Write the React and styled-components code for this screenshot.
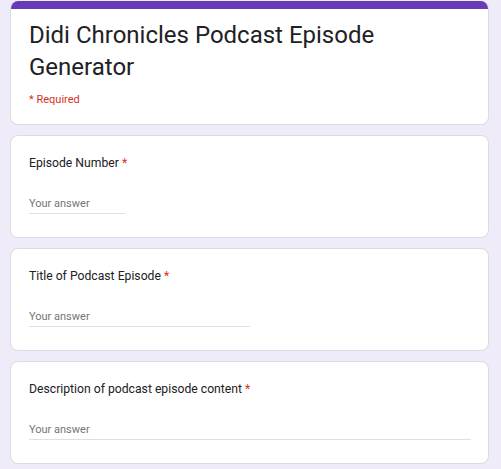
import React from 'react'
import styled, { createGlobalStyle } from 'styled-components';

const GlobalStyle = createGlobalStyle`
  body {
    margin: 0;
    background: #f0ebf8;
    font-family: Roboto, "Liberation Sans", sans-serif;
  }
`;

const questions = [
  { label: 'Episode Number', width: 96 },
  { label: 'Title of Podcast Episode', width: 221 },
  { label: 'Description of podcast episode content', width: 442 },
];

function App() {
  return (
    <>
      <GlobalStyle />
      <StyledPage>
        <StyledHeaderCard>
          <div className='bar' />
          <div className='header-body'>
            <h1>Didi Chronicles Podcast Episode Generator</h1>
            <div className='required'>* Required</div>
          </div>
        </StyledHeaderCard>
        {questions.map((q) => (
          <StyledQuestion key={q.label} $width={q.width}>
            <label className='q-label'>{q.label} <span>*</span></label>
            <input className='q-input' type='text' placeholder='Your answer' />
          </StyledQuestion>
        ))}
      </StyledPage>
    </>
  )
}

const StyledPage = styled.div`
  display: flex;
  flex-direction: column;
  gap: 10px;
  padding: 1px 12px 10px 10px;
`;

const StyledHeaderCard = styled.div`
  background: #fff;
  border: 1px solid #dadce0;
  border-top: none;
  border-radius: 8px;
  overflow: hidden;
  height: 124px;
  box-sizing: border-box;
  .bar {
    height: 8px;
    background: #673ab7;
  }
  .header-body {
    padding: 10px 18px 0;
  }
  h1 {
    margin: 0;
    font-size: 24px;
    font-weight: 400;
    line-height: 32px;
    color: #202124;
    width: 400px;
  }
  .required {
    margin-top: 10px;
    font-size: 11px;
    color: #d93025;
  }
`;

const StyledQuestion = styled.div`
  background: #fff;
  border: 1px solid #dadce0;
  border-radius: 8px;
  padding: 18px 18px 0;
  height: 103px;
  box-sizing: border-box;
  display: flex;
  flex-direction: column;
  .q-label {
    font-size: 12.2px;
    line-height: 18px;
    color: #202124;
    span {
      color: #d93025;
    }
  }
  .q-input {
    margin-top: 25px;
    width: ${(p) => p.$width}px;
    border: none;
    border-bottom: 1px solid #e0e0e0;
    outline: none;
    padding: 0 0 3px;
    font-family: Roboto, "Liberation Sans", sans-serif;
    font-size: 11px;
    color: #202124;
    ::placeholder {
      color: #70757a;
    }
  }
`;

export default App;
